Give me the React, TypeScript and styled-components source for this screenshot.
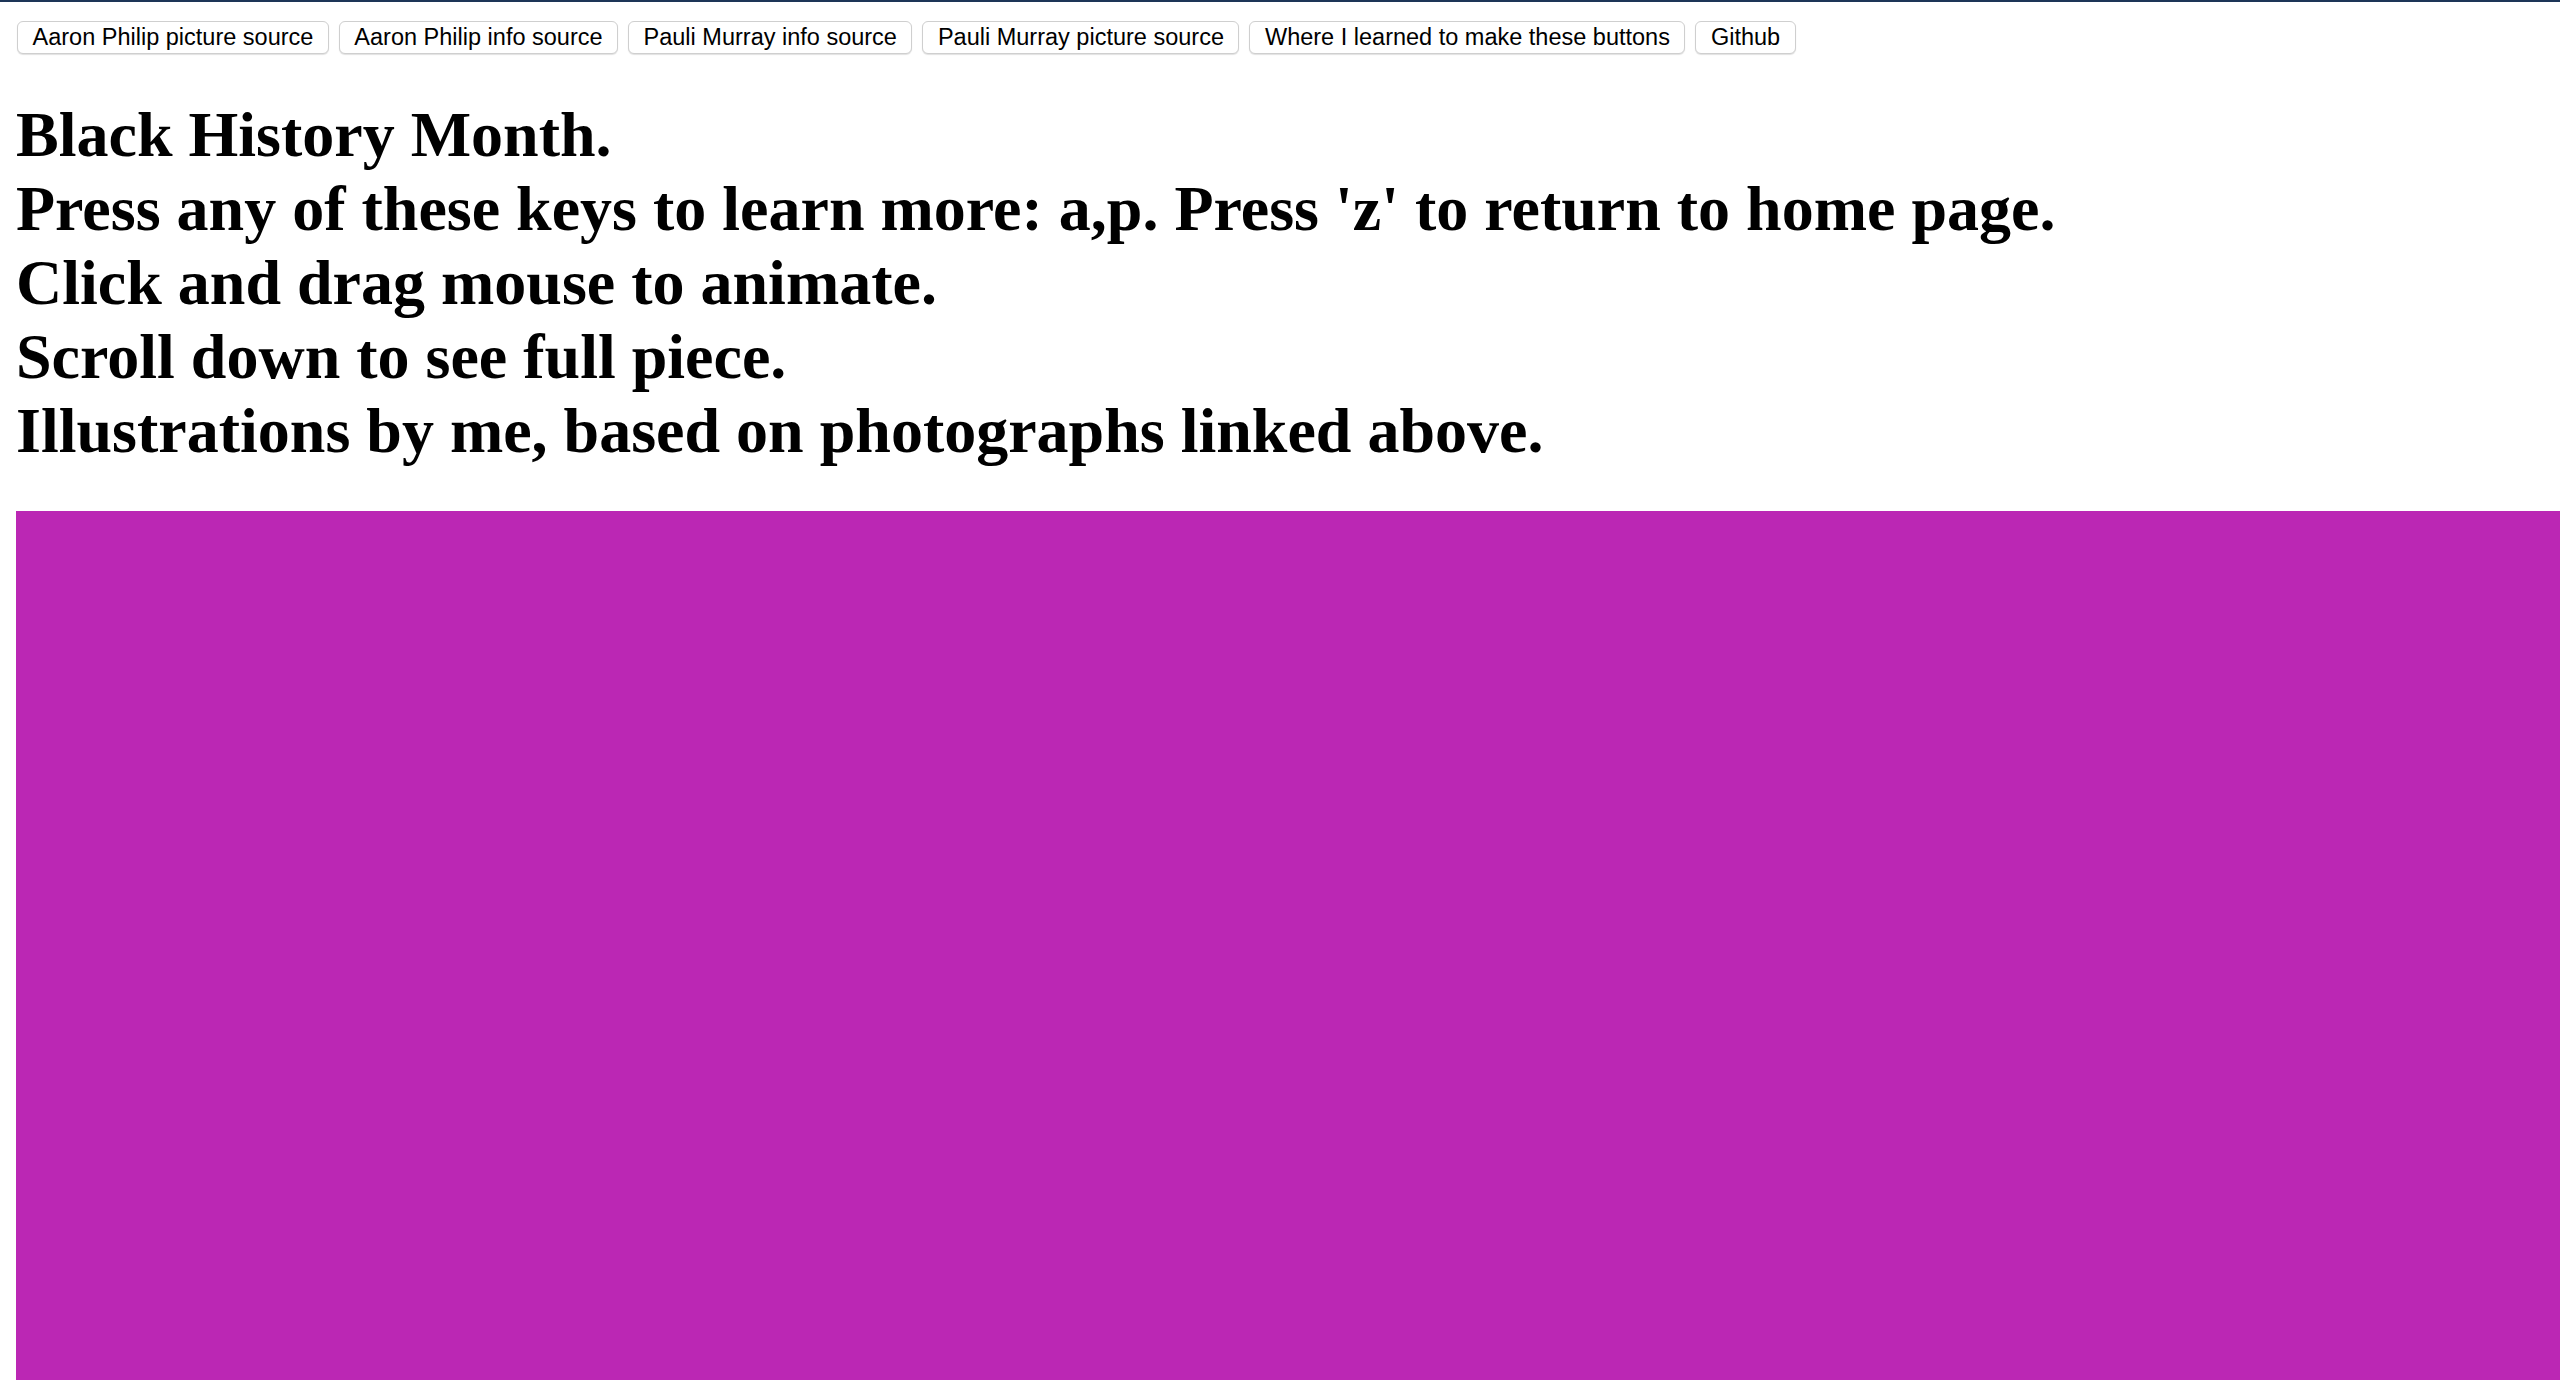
import React from "react";
import styled, { createGlobalStyle } from "styled-components";

const Global = createGlobalStyle`
  html, body {
    margin: 0;
    padding: 0;
    background: #ffffff;
    overflow: hidden;
  }
  body {
    font-family: "Liberation Serif", "Times New Roman", serif;
  }
`;

const TopEdge = styled.div`
  height: 2px;
  background: #1d3557;
`;

const Page = styled.div`
  padding: 0 0 0 16px;
`;

const ButtonRow = styled.nav`
  display: flex;
  gap: 10px;
  padding-top: 19px;
  padding-left: 1px;
`;

const LinkButton = styled.button`
  height: 33px;
  padding: 0 14.5px;
  background: #ffffff;
  border: 1px solid #cfcfcf;
  border-radius: 6px;
  box-shadow: 0 1px 1px rgba(0, 0, 0, 0.12);
  font-family: "Liberation Sans", Arial, sans-serif;
  font-size: 23.5px;
  color: #000000;
  white-space: nowrap;
  cursor: pointer;
`;

const Heading = styled.h1`
  margin: 44px 0 0 0;
  font-family: "Liberation Serif", "Times New Roman", serif;
  font-weight: bold;
  font-size: 64px;
  line-height: 74px;
  color: #000000;
  white-space: nowrap;
`;

const Line = styled.span`
  display: block;
`;

const Canvas = styled.div`
  margin-top: 43px;
  width: calc(100vw - 16px);
  height: 900px;
  background: #bb27b4;
`;

const links = [
  "Aaron Philip picture source",
  "Aaron Philip info source",
  "Pauli Murray info source",
  "Pauli Murray picture source",
  "Where I learned to make these buttons",
  "Github",
];

const lines = [
  "Black History Month.",
  "Press any of these keys to learn more: a,p. Press 'z' to return to home page.",
  "Click and drag mouse to animate.",
  "Scroll down to see full piece.",
  "Illustrations by me, based on photographs linked above.",
];

export default function App() {
  return (
    <>
      <Global />
      <TopEdge />
      <Page>
        <ButtonRow>
          {links.map((l) => (
            <LinkButton key={l}>{l}</LinkButton>
          ))}
        </ButtonRow>
        <Heading>
          {lines.map((l) => (
            <Line key={l}>{l}</Line>
          ))}
        </Heading>
        <Canvas />
      </Page>
    </>
  );
}
